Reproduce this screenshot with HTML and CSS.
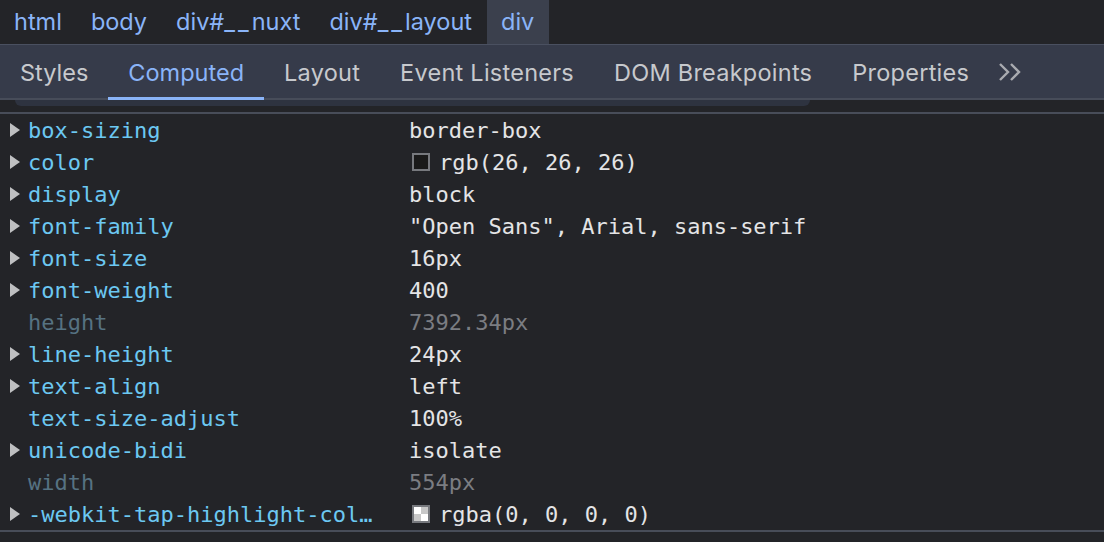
FILE: index.html
```html
<!DOCTYPE html>
<html>
<head>
<meta charset="utf-8">
<link rel="stylesheet" href="styles.css">
</head>
<body>
<div class="crumbs">
  <span class="crumb">html</span>
  <span class="crumb">body</span>
  <span class="crumb">div#<span class="us">__</span>nuxt</span>
  <span class="crumb">div#<span class="us">__</span>layout</span>
  <span class="crumb sel">div</span>
</div>
<div class="tabs">
  <span class="tab">Styles</span>
  <span class="tab active">Computed</span>
  <span class="tab">Layout</span>
  <span class="tab">Event Listeners</span>
  <span class="tab">DOM Breakpoints</span>
  <span class="tab">Properties</span>
  <span class="more"><svg width="26" height="20" viewBox="0 0 26 20"><path d="M2 2 L10 10 L2 18 M13 2 L21 10 L13 18" fill="none" stroke="#a9abb0" stroke-width="2.4"/></svg></span>
</div>
<div class="thumbrow"><div class="thumb"></div></div>
<div class="list">
  <div class="row"><span class="arrow"></span><span class="name">box-sizing</span><span class="val">border-box</span></div>
  <div class="row"><span class="arrow"></span><span class="name">color</span><span class="val"><span class="sw dark"></span>rgb(26, 26, 26)</span></div>
  <div class="row"><span class="arrow"></span><span class="name">display</span><span class="val">block</span></div>
  <div class="row"><span class="arrow"></span><span class="name">font-family</span><span class="val">"Open Sans", Arial, sans-serif</span></div>
  <div class="row"><span class="arrow"></span><span class="name">font-size</span><span class="val">16px</span></div>
  <div class="row"><span class="arrow"></span><span class="name">font-weight</span><span class="val">400</span></div>
  <div class="row dim"><span class="noarrow"></span><span class="name">height</span><span class="val">7392.34px</span></div>
  <div class="row"><span class="arrow"></span><span class="name">line-height</span><span class="val">24px</span></div>
  <div class="row"><span class="arrow"></span><span class="name">text-align</span><span class="val">left</span></div>
  <div class="row"><span class="noarrow"></span><span class="name">text-size-adjust</span><span class="val">100%</span></div>
  <div class="row"><span class="arrow"></span><span class="name">unicode-bidi</span><span class="val">isolate</span></div>
  <div class="row dim"><span class="noarrow"></span><span class="name">width</span><span class="val">554px</span></div>
  <div class="row"><span class="arrow"></span><span class="name">-webkit-tap-highlight-col…</span><span class="val"><span class="sw check"></span>rgba(0, 0, 0, 0)</span></div>
</div>
</body>
</html>
```
FILE: styles.css
```css
html, body {
  margin: 0;
  padding: 0;
  background: #232428;
  width: 1104px;
  height: 542px;
  overflow: hidden;
}
body {
  font-family: Inter, "Noto Sans", sans-serif;
}
.crumbs {
  display: flex;
  height: 44px;
  align-items: stretch;
  background: #232428;
}
.crumb {
  display: flex;
  align-items: center;
  padding: 0 15px 2px 14px;
  font-size: 23.5px;
  color: #8ab4f8;
}
.crumb .us {
  letter-spacing: 3px;
}
.crumb.sel {
  background: #3b404d;
}
.tabs {
  display: flex;
  align-items: stretch;
  height: 53px;
  background: #363b4a;
  border-top: 1px solid #4a5060;
  border-bottom: 2px solid #474c59;
}
.tab {
  display: flex;
  align-items: center;
  padding: 2px 20px 0;
  font-size: 23.5px;
  letter-spacing: 0.25px;
  color: #c7c9cd;
  border-bottom: 3px solid transparent;
  margin-bottom: -2px;
}
.tab:first-child {
  letter-spacing: 0;
}
.tab.active {
  color: #8ab4f8;
  border-bottom-color: #8ab4f8;
  letter-spacing: 0;
}
.more {
  display: flex;
  align-items: center;
  padding: 1px 0 0 9px;
}
.thumbrow {
  height: 6px;
  padding-left: 15px;
  margin-bottom: 6px;
}
.thumb {
  width: 795px;
  height: 6px;
  background: #2e3340;
  border-radius: 0 0 9px 9px;
}
.list {
  border-top: 2px solid #484d59;
  border-bottom: 2px solid #484d59;
  font-family: "DejaVu Sans Mono", monospace;
  font-size: 22px;
}
.row {
  display: flex;
  align-items: center;
  height: 32px;
}
.arrow, .noarrow {
  width: 29px;
  flex: none;
  display: flex;
}
.arrow::before {
  content: "";
  margin-left: 10px;
  border-left: 10px solid #bfc0c2;
  border-top: 7px solid transparent;
  border-bottom: 7px solid transparent;
}
.name {
  width: 381px;
  flex: none;
  margin-left: -1px;
  color: #6cc8f2;
  white-space: nowrap;
}
.val {
  color: #e4e4e6;
  display: flex;
  align-items: center;
  white-space: pre;
}
.row.dim .name { color: #567282; }
.row.dim .val { color: #7b7d82; }
.sw {
  width: 14px;
  height: 14px;
  border: 2px solid #77797e;
  margin: 0 9px 0 3px;
  box-sizing: content-box;
}
.sw.dark { background: #1a1a1a; }
.sw.check {
  background:
    linear-gradient(#fff, #fff) 0 0 / 7px 7px no-repeat,
    linear-gradient(#fff, #fff) 7px 7px / 7px 7px no-repeat,
    #c8c8c8;
}
```
